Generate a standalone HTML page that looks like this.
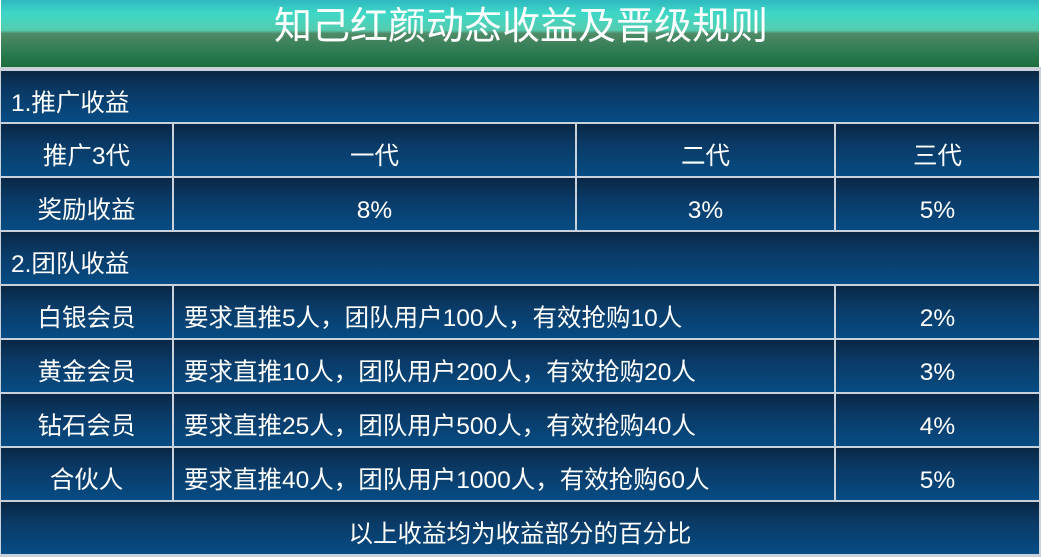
<!DOCTYPE html><html><head><meta charset="utf-8"><style>
*{margin:0;padding:0;box-sizing:border-box}
body{width:1041px;height:557px;background:#fff;overflow:hidden;position:relative;font-family:"Liberation Sans","Noto Sans CJK SC",sans-serif;color:#fff}
.hd{position:absolute;left:1px;top:0;width:1038px;height:67px;background:linear-gradient(#2fb8c0 0%,#3ed8c6 20%,#55ccb0 45%,#4f8a66 50%,#2a7a50 80%,#1d6e3e 100%)}
.hd .t{position:absolute;left:0;right:0;top:4px;text-align:center;font-size:38px;line-height:46px;padding-left:2px}
.row{position:absolute;left:1px;width:1038px;display:flex}
.c{height:100%;overflow:hidden;white-space:nowrap;background:linear-gradient(#0a2745,#0a3a66 40%,#064c84);border-right:2px solid #c9d2da;text-align:center;font-size:24.5px;line-height:66px}
.c:last-child{border-right:none}
.l{text-align:left;padding-left:10px}
</style></head><body>
<div class="hd"><div class="t">知己红颜动态收益及晋级规则</div></div>
<div style="position:absolute;left:0;top:67px;width:1041px;height:490px;background:#c9d2da"></div>
<div class="row" style="top:71px;height:51px"><div class="c l" style="width:1038px">1.推广收益</div></div>
<div class="row" style="top:124px;height:52px"><div class="c" style="width:173px">推广3代</div><div class="c" style="width:403px">一代</div><div class="c" style="width:259px">二代</div><div class="c" style="width:203px">三代</div></div>
<div class="row" style="top:178px;height:52px"><div class="c" style="width:173px">奖励收益</div><div class="c" style="width:403px">8%</div><div class="c" style="width:259px">3%</div><div class="c" style="width:203px">5%</div></div>
<div class="row" style="top:232px;height:52px"><div class="c l" style="width:1038px">2.团队收益</div></div>
<div class="row" style="top:286px;height:52px"><div class="c" style="width:173px">白银会员</div><div class="c l" style="width:662px">要求直推5人，团队用户100人，有效抢购10人</div><div class="c" style="width:203px">2%</div></div>
<div class="row" style="top:340px;height:52px"><div class="c" style="width:173px">黄金会员</div><div class="c l" style="width:662px">要求直推10人，团队用户200人，有效抢购20人</div><div class="c" style="width:203px">3%</div></div>
<div class="row" style="top:394px;height:52px"><div class="c" style="width:173px">钻石会员</div><div class="c l" style="width:662px">要求直推25人，团队用户500人，有效抢购40人</div><div class="c" style="width:203px">4%</div></div>
<div class="row" style="top:448px;height:52px"><div class="c" style="width:173px">合伙人</div><div class="c l" style="width:662px">要求直推40人，团队用户1000人，有效抢购60人</div><div class="c" style="width:203px">5%</div></div>
<div class="row" style="top:502px;height:52px"><div class="c" style="width:1038px">以上收益均为收益部分的百分比</div></div>
</body></html>
